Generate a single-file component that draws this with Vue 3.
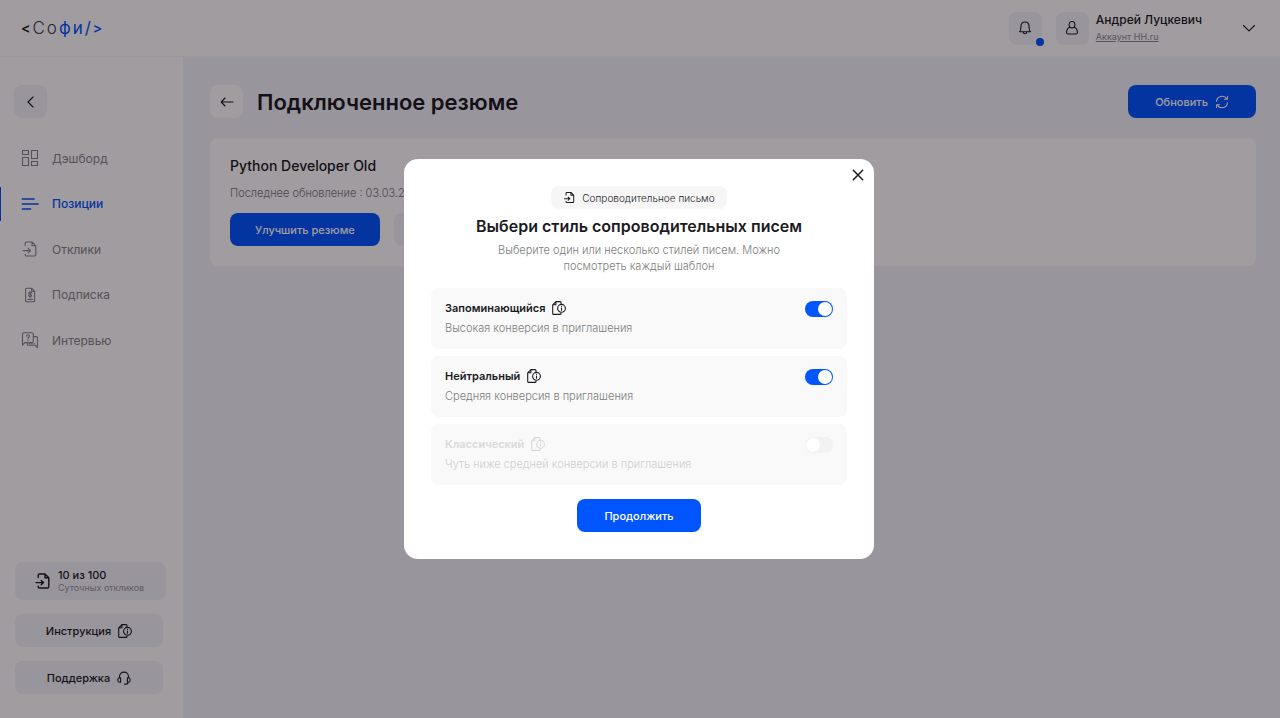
<script setup>
import { ref } from 'vue'

const logo = [
  { char: '<', kind: 'mark' },
  { char: 'С', kind: 'thin' },
  { char: 'о', kind: 'thin' },
  { char: 'ф', kind: 'blue' },
  { char: 'и', kind: 'blue' },
  { char: '/', kind: 'blue' },
  { char: '>', kind: 'mark blue' },
]

const nav = [
  { id: 'dashboard', label: 'Дэшборд' },
  { id: 'positions', label: 'Позиции', active: true },
  { id: 'replies', label: 'Отклики' },
  { id: 'billing', label: 'Подписка' },
  { id: 'interview', label: 'Интервью' },
]

const styles = ref([
  { id: 'bright', title: 'Запоминающийся', text: 'Высокая конверсия в приглашения', on: true },
  { id: 'neutral', title: 'Нейтральный', text: 'Средняя конверсия в приглашения', on: true },
  { id: 'classic', title: 'Классический', text: 'Чуть ниже средней конверсии в приглашения', on: false, disabled: true },
])
</script>

<template>
  <div class="app">
    <svg class="defs" aria-hidden="true">
      <symbol id="i-export" viewBox="0 0 18 18">
        <path d="M4.2 5.6V3.2a1.2 1.2 0 0 1 1.2-1.2H11l3.8 3.8v9a1.2 1.2 0 0 1-1.2 1.2H5.4a1.2 1.2 0 0 1-1.2-1.2v-.6M11 2v3.8h3.8M2 10.6h7.4M7.2 8.4l2.3 2.2-2.3 2.2" />
      </symbol>
      <symbol id="i-info" viewBox="0 0 14 14">
        <path d="M9 2.600V1.600a1 1 0 0 0-1-1H3.900L.7 3.800v8.600a1 1 0 0 0 1 1H8a1 1 0 0 0 1-1v-.4M3.900.8v3H.9" />
        <circle cx="9.500" cy="7.300" r="3.900" />
        <path d="M9.500 7v2.300M9.500 5.200v.3" />
      </symbol>
      <symbol id="i-dashboard" viewBox="0 0 18 18">
        <path d="M1.5 1.500h6v4h-6zM10.500 1.500h6v8h-6zM1.500 8.500h6v8h-6zM10.500 12.500h6v4h-6z" />
      </symbol>
      <symbol id="i-positions" viewBox="0 0 18 18">
        <path d="M1.500 4H13M1.500 9h15.500M1.500 14h8" stroke-width="1.700" />
      </symbol>
      <symbol id="i-replies" viewBox="0 0 18 18">
        <path d="M4.2 5.6V3.2a1.2 1.2 0 0 1 1.2-1.2H11l3.8 3.8v9a1.2 1.2 0 0 1-1.2 1.2H5.4a1.2 1.2 0 0 1-1.2-1.2v-.6M11 2v3.8h3.8M2 10.6h7.4M7.2 8.4l2.3 2.2-2.3 2.2" />
      </symbol>
      <symbol id="i-billing" viewBox="0 0 18 18">
        <path d="M5.600 2.200h5l2.900 2.900v9.700a1 1 0 0 1-1 1H5.600a1 1 0 0 1-1-1V3.200a1 1 0 0 1 1-1zM10.600 2.400v2.800h2.800M7 13.400h4.300M9.100 5.400v6M10.600 7c-.3-.5-.8-.7-1.500-.7-.9 0-1.500.4-1.500 1.100 0 1.500 3 .7 3 2.100 0 .7-.6 1.100-1.500 1.100-.8 0-1.300-.3-1.600-.8" />
      </symbol>
      <symbol id="i-interview" viewBox="0 0 18 18">
        <path d="M6.2 11.6H3.8l-2.3 2.6V3.1a1.4 1.4 0 0 1 1.4-1.4h8a1.4 1.4 0 0 1 1.4 1.4v2.5M12.300 5.600h2.800A1.400 1.400 0 0 1 16.500 7v9.600l-2.400-2.300H7.600a1.400 1.400 0 0 1-1.400-1.400v-1.300h4.700a1.400 1.400 0 0 0 1.400-1.400zM5.600 5.100c0-1.800 2.900-1.700 2.900 0 0 1.200-1.500 1.100-1.500 2.400M7 8.900v.7M8.500 12.700h.6M10.800 12.700h.6M13.100 12.700h.6" />
      </symbol>
    </svg>

    <header class="header">
      <a class="logo" href="#" aria-label="Софи"><span v-for="l in logo" :key="l.char" :class="l.kind">{{ l.char }}</span></a>
      <div class="account">
        <button class="square bell" type="button" aria-label="Уведомления">
          <svg class="icon" width="16" height="16" viewBox="0 0 16 16">
            <path d="M2.600 11.700c1-.9 1.300-2.100 1.300-4.800C3.900 4 5.500 2 8 2s4.100 2 4.100 4.900c0 2.700.3 3.900 1.300 4.800zM6.200 12c.2 2.300 3.400 2.300 3.600 0" />
          </svg>
          <span class="dot"></span>
        </button>
        <button class="square" type="button" aria-label="Профиль">
          <svg class="icon" width="16" height="16" viewBox="0 0 16 16">
            <ellipse cx="8" cy="4.700" rx="2.900" ry="3.200" />
            <path d="M5.600 7.300C3.500 8.300 2.600 10 2.600 12.600q0 1.400 1.400 1.400h8q1.400 0 1.400-1.400c0-2.600-.9-4.300-3-5.300" />
          </svg>
        </button>
        <div class="who">
          <span class="name">Андрей Луцкевич</span>
          <a class="link" href="#">Аккаунт HH.ru</a>
        </div>
        <button class="plain" type="button" aria-label="Открыть меню">
          <svg class="icon" width="14" height="14" viewBox="0 0 14 14"><path d="M1.500 4.500 7 9.800l5.500-5.300" /></svg>
        </button>
      </div>
    </header>

    <div class="body">
      <aside class="sidebar">
        <button class="square collapse" type="button" aria-label="Свернуть меню">
          <svg class="icon" width="14" height="14" viewBox="0 0 14 14"><path d="M9 2 4 7l5 5" /></svg>
        </button>
        <nav class="nav">
          <a v-for="n in nav" :key="n.id" href="#" class="nav-item" :class="{ active: n.active }">
            <svg class="icon" width="18" height="18"><use :href="'#i-' + n.id" /></svg>
            <span>{{ n.label }}</span>
          </a>
        </nav>
        <div class="tools">
          <div class="quota">
            <svg class="icon bold" width="18" height="18"><use href="#i-export" /></svg>
            <div class="quota-text">
              <span class="count">10 из 100</span>
              <span class="hint">Суточных откликов</span>
            </div>
          </div>
          <button class="tool" type="button">Инструкция
            <svg class="icon" width="14" height="14"><use href="#i-info" /></svg>
          </button>
          <button class="tool" type="button">Поддержка
            <svg class="icon" width="14" height="14" viewBox="0 0 14 14">
              <path d="M2.500 6.500V5.600a4.500 4.500 0 0 1 9 0v.9M3.600 6.700v4.600H2.800A1.900 1.900 0 0 1 .9 9.400v-.8a1.900 1.900 0 0 1 1.900-1.900zM10.400 6.700v4.600h.8a1.900 1.900 0 0 0 1.900-1.900v-.8a1.900 1.900 0 0 0-1.900-1.900zM11.300 11.300c-.2 1.200-1.200 1.800-2.500 1.800H7.500" />
            </svg>
          </button>
        </div>
      </aside>

      <main class="main">
        <div class="heading">
          <button class="square white" type="button" aria-label="Назад">
            <svg class="icon" width="14" height="14" viewBox="0 0 14 14"><path d="M13 7H1.300M5 3 1.200 7 5 11" /></svg>
          </button>
          <h1>Подключенное резюме</h1>
          <button class="primary refresh" type="button">Обновить
            <svg class="icon" width="14" height="14" viewBox="0 0 14 14">
              <path d="M1.500 6.300A5.500 5.500 0 0 1 11.700 4M12.500 7.700A5.500 5.500 0 0 1 2.300 10M12.400 1.400v2.900H9.500M1.600 12.600V9.700h2.900" />
            </svg>
          </button>
        </div>
        <section class="card">
          <h2>Python Developer Old</h2>
          <p>Последнее обновление : 03.03.20</p>
          <div class="actions">
            <button class="primary" type="button">Улучшить резюме</button>
            <button class="secondary" type="button" aria-label="Ещё"></button>
          </div>
        </section>
      </main>
    </div>

    <div class="overlay">
      <form class="dialog" role="dialog" aria-modal="true" aria-labelledby="dlg-title" @submit.prevent>
        <button class="close" type="button" aria-label="Закрыть">
          <svg class="icon" width="12" height="12" viewBox="0 0 12 12"><path d="m1.300 1.300 9.400 9.400M10.700 1.300l-9.400 9.400" /></svg>
        </button>
        <span class="tag">
          <svg class="icon bold" width="13" height="13"><use href="#i-export" /></svg>
          Сопроводительное письмо
        </span>
        <h2 id="dlg-title">Выбери стиль сопроводительных писем</h2>
        <p class="lead">Выберите один или несколько стилей писем. Можно посмотреть каждый шаблон</p>
        <ul class="options">
          <li v-for="s in styles" :key="s.id" class="option" :class="{ off: s.disabled }">
            <div class="option-text">
              <div class="option-title">
                <label :for="s.id">{{ s.title }}</label>
                <button class="plain" type="button" aria-label="Посмотреть шаблон">
                  <svg class="icon" width="14" height="14"><use href="#i-info" /></svg>
                </button>
              </div>
              <p>{{ s.text }}</p>
            </div>
            <input :id="s.id" v-model="s.on" class="switch" type="checkbox" role="switch" :disabled="s.disabled" />
          </li>
        </ul>
        <button class="primary" type="submit">Продолжить</button>
      </form>
    </div>
  </div>
</template>

<style>
body { background: #f3f4f8; }
</style>

<style scoped>
.app {
  min-height: 100vh;
  display: flex;
  flex-direction: column;
  background: #f3f4f8;
  color: #1b1b1f;
  font-family: Inter, "Noto Sans", sans-serif;
  font-size: 11px;
}
* { box-sizing: border-box; }
h1, h2, p, ul { margin: 0; padding: 0; }
button { font: inherit; color: inherit; border: 0; margin: 0; padding: 0; cursor: pointer; }
a { color: inherit; text-decoration: none; }
.defs { position: absolute; width: 0; height: 0; }
.icon {
  display: block;
  flex: none;
  fill: none;
  stroke: currentColor;
  stroke-width: 1.1;
  stroke-linecap: round;
  stroke-linejoin: round;
}
.icon.bold { stroke-width: 1.4; }
.plain { background: none; }

.header {
  height: 57px;
  flex: none;
  display: flex;
  align-items: center;
  justify-content: space-between;
  padding: 0 24px 0 21px;
  background: #fff;
  border-bottom: 1px solid #f7f7fa;
}
.logo { display: flex; align-items: center; gap: 2px; font-size: 17px; line-height: 24px; }
.mark { font-size: 14px; font-weight: 600; }
.thin { font-weight: 300; color: #3c3c42; }
.blue { color: #0055ff; }
.account { display: flex; align-items: center; }
.square {
  width: 33px;
  height: 33px;
  flex: none;
  display: flex;
  align-items: center;
  justify-content: center;
  border-radius: 8px;
  background: #f3f4f8;
}
.bell { position: relative; margin-right: 14px; }
.dot { position: absolute; right: -2px; bottom: -1px; width: 8px; height: 8px; border-radius: 50%; background: #0055ff; }
.who { display: flex; flex-direction: column; margin: 0 40px 0 7px; }
.name { font-size: 12px; line-height: 18px; font-weight: 500; }
.link { font-size: 9px; line-height: 16px; color: #8b8b90; text-decoration: underline; }

.body { flex: 1; display: flex; }
.sidebar { width: 183px; flex: none; display: flex; flex-direction: column; background: #fff; padding: 28px 0 24px; }
.collapse { margin-left: 14px; }
.nav { min-height: 216px; margin-top: 23px; display: flex; flex-direction: column; justify-content: space-between; }
.nav-item {
  height: 34px;
  display: flex;
  align-items: center;
  gap: 13px;
  padding-left: 20px;
  border-left: 1px solid transparent;
  color: #85858a;
  font-size: 12px;
}
.nav-item.active { color: #0055ff; border-color: #0055ff; font-weight: 500; }
.tools { margin-top: auto; padding: 0 17px 0 15px; display: flex; flex-direction: column; gap: 14px; }
.quota { height: 38px; display: flex; align-items: center; gap: 6px; padding-left: 19px; border-radius: 8px; background: #f3f4f8; }
.quota-text { display: flex; flex-direction: column; }
.count { font-size: 11px; line-height: 13px; font-weight: 500; }
.hint { font-size: 9px; line-height: 12px; color: #97979c; }
.tool {
  height: 33px;
  margin-right: 3px;
  display: flex;
  align-items: center;
  justify-content: center;
  gap: 7px;
  border-radius: 8px;
  background: #f3f4f8;
  font-weight: 500;
}

.main { flex: 1; min-width: 0; padding: 28px 24px 24px 27px; }
.heading { display: flex; align-items: center; gap: 14px; margin-bottom: 20px; }
.white { background: #fff; }
h1 { font-size: 22px; line-height: 32px; font-weight: 600; }
.primary, .secondary {
  height: 33px;
  display: flex;
  align-items: center;
  justify-content: center;
  gap: 7px;
  padding: 0 27px;
  border-radius: 8px;
  background: #0055ff;
  color: #fff;
  font-size: 11px;
  font-weight: 500;
}
.refresh { margin-left: auto; }
.actions .primary { padding: 0 25px; }
.secondary { width: 150px; background: #f3f4f8; color: #1b1b1f; }
.card { padding: 18px 20px 20px; border-radius: 8px; background: #fff; }
.card h2 { font-size: 14px; line-height: 20px; font-weight: 500; }
.card p { margin: 9px 0 12px; line-height: 16px; font-weight: 300; color: #77777c; }
.actions { display: flex; gap: 14px; }

.overlay {
  position: fixed;
  inset: 0;
  display: flex;
  align-items: center;
  justify-content: center;
  padding-right: 2px;
  background: rgba(10, 0, 10, 0.39);
}
.dialog {
  position: relative;
  width: 470px;
  display: flex;
  flex-direction: column;
  align-items: center;
  padding: 27px;
  border-radius: 14px;
  background: #fff;
}
.close { position: absolute; top: 10px; right: 10px; background: none; }
.close .icon { stroke-width: 1.5; }
.tag {
  height: 23px;
  display: flex;
  align-items: center;
  gap: 6px;
  padding: 0 12px;
  border-radius: 8px;
  background: #f6f6f6;
  font-size: 10px;
  font-weight: 300;
}
.dialog h2 { margin-top: 5px; font-size: 16px; line-height: 24px; font-weight: 600; }
.lead { width: 300px; margin-top: 4px; line-height: 16px; font-weight: 300; text-align: center; color: #7c7c7c; }
.options { align-self: stretch; margin: 14px 0; display: flex; flex-direction: column; gap: 7px; list-style: none; }
.option {
  display: flex;
  align-items: flex-start;
  justify-content: space-between;
  padding: 12px 14px 13px;
  border-radius: 8px;
  background: #f9f9f9;
}
.option-title { height: 16px; display: flex; align-items: center; gap: 7px; font-weight: 600; }
.option p { margin-top: 4px; line-height: 16px; font-weight: 300; color: #7c7c7c; }
.off .option-title { color: #d9d9d9; }
.option.off p { color: #cfcfcf; }
.switch {
  appearance: none;
  width: 28px;
  height: 16px;
  margin: 1px 0 0;
  padding: 1px;
  display: flex;
  border-radius: 8px;
  background: #f2f2f2;
}
.switch::before { content: ""; width: 14px; height: 14px; border-radius: 50%; background: #fff; }
.switch:checked { background: #0055ff; justify-content: flex-end; }
</style>
